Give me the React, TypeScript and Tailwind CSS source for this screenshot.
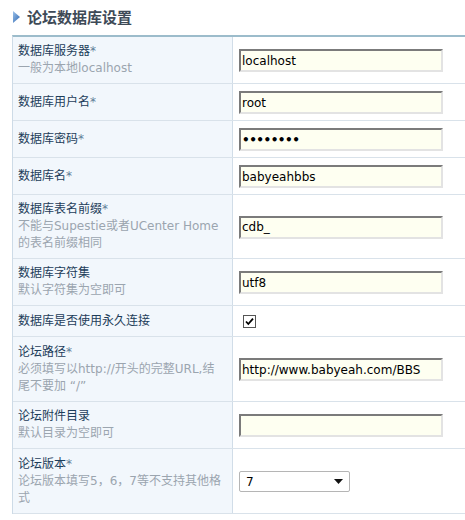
import React from "react";

type Row = {
  label: string;
  required?: boolean;
  tips?: string[];
  kind: "text" | "password" | "check" | "select";
  value?: string;
  tall?: string;
};

const rows: Row[] = [
  { label: "数据库服务器", required: true, tips: ["一般为本地localhost"], kind: "text", value: "localhost" },
  { label: "数据库用户名", required: true, kind: "text", value: "root" },
  { label: "数据库密码", required: true, kind: "password", value: "••••••••" },
  { label: "数据库名", required: true, kind: "text", value: "babyeahbbs" },
  {
    label: "数据库表名前缀",
    required: true,
    tips: ["不能与Supestie或者UCenter Home", "的表名前缀相同"],
    kind: "text",
    value: "cdb_",
  },
  { label: "数据库字符集", tips: ["默认字符集为空即可"], kind: "text", value: "utf8" },
  { label: "数据库是否使用永久连接", kind: "check", tall: "min-h-[31px]" },
  {
    label: "论坛路径",
    required: true,
    tips: ["必须填写以http://开头的完整URL,结", "尾不要加 “/”"],
    kind: "text",
    value: "http://www.babyeah.com/BBS",
    tall: "min-h-[65px]",
  },
  { label: "论坛附件目录", tips: ["默认目录为空即可"], kind: "text", value: "" },
  {
    label: "论坛版本",
    required: true,
    tips: ["论坛版本填写5，6，7等不支持其他格", "式"],
    kind: "select",
    value: "7",
    tall: "min-h-[65px]",
  },
];

function Field({ row }: { row: Row }) {
  if (row.kind === "check") {
    return (
      <span className="ml-[4px] flex h-[13px] w-[13px] items-center justify-center border border-[#555] bg-white">
        <svg width="9" height="9" viewBox="0 0 9 9">
          <path d="M1 4.5 L3.3 7 L8 1.6" fill="none" stroke="#000" strokeWidth="1.8" />
        </svg>
      </span>
    );
  }
  if (row.kind === "select") {
    return (
      <div className="flex h-[21px] w-[111px] items-center justify-between rounded-[2px] border border-[#b5b5b5] bg-white pl-[6px] pr-[6px] text-[12px] text-black">
        <span>{row.value}</span>
        <svg width="9" height="5" viewBox="0 0 9 5">
          <path d="M0 0 H9 L4.5 5 Z" fill="#111" />
        </svg>
      </div>
    );
  }
  return (
    <div
      className={
        "flex h-[23px] w-[204px] items-center border-2 border-t-[#7b7b7b] border-l-[#7b7b7b] border-r-[#e3e3e3] border-b-[#e3e3e3] bg-[#fefff1] pl-[1px] text-black " +
        (row.kind === "password" ? "text-[12px] font-bold tracking-[-0.5px]" : "text-[12px]")
      }
    >
      {row.value}
    </div>
  );
}

export default function App() {
  return (
    <div
      className="h-[520px] w-[465px] overflow-hidden bg-white"
      style={{ fontFamily: '"DejaVu Sans", "Noto Sans CJK SC", sans-serif' }}
    >
      <div className="flex h-[35px] items-center gap-[7px] pb-[1px] pl-[13px]">
        <svg width="7" height="12" viewBox="0 0 7 12">
          <defs>
            <linearGradient id="tri" x1="0" y1="0" x2="1" y2="1">
              <stop offset="0" stopColor="#9cc2ea" />
              <stop offset="1" stopColor="#2f66b0" />
            </linearGradient>
          </defs>
          <path d="M0 0 L7 6 L0 12 Z" fill="url(#tri)" />
        </svg>
        <h2
          className="text-[15px] font-bold leading-[20px] text-[#3e4a57]"
          style={{ fontFamily: '"Noto Sans CJK SC", sans-serif' }}
        >
          论坛数据库设置
        </h2>
      </div>

      <div className="ml-[12px] border-t-2 border-l border-t-[#9cbccb] border-l-[#cddbe7]">
        {rows.map((row) => (
          <div
            key={row.label}
            className={"grid grid-cols-[220px_1fr] border-b border-[#d9e2ea] " + (row.tall ?? "")}
          >
            <div className="flex flex-col justify-center border-r border-[#d1dde8] bg-[#f2f7fc] px-[5px] py-[6px] text-[12px] leading-[17px]">
              <div className="flex h-[17px] items-center text-[#1d3d5a]">
                {row.label}
                {row.required && <span className="text-[#5f7d98]">*</span>}
              </div>
              {row.tips?.map((t) => (
                <div key={t} className="flex h-[17px] items-center whitespace-nowrap text-[#9ba5af]">
                  {t}
                </div>
              ))}
            </div>
            <div className="flex items-center pt-[7px] pb-[6px] pl-[6px]">
              <Field row={row} />
            </div>
          </div>
        ))}
      </div>
    </div>
  );
}
